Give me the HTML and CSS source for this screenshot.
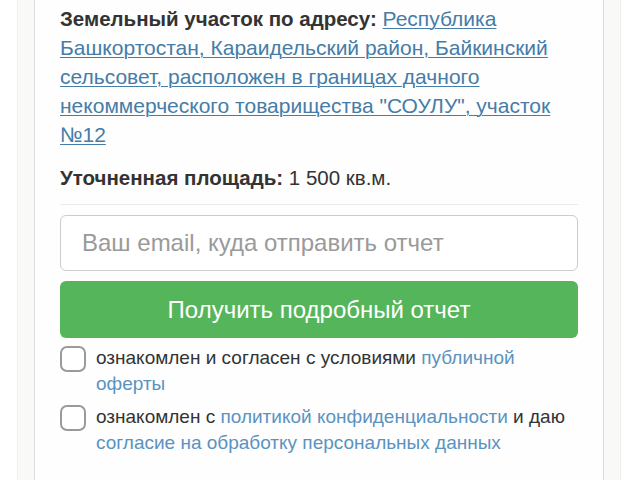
FILE: index.html
```html
<!DOCTYPE html>
<html lang="ru">
<head>
<meta charset="utf-8">
<link rel="stylesheet" href="styles.css">
</head>
<body>
<div class="outer">
  <div class="card">
    <p class="addr"><b>Земельный участок по адресу:</b> <a href="#">Республика Башкортостан, Караидельский район, Байкинский сельсовет, расположен в границах дачного некоммерческого товарищества "СОУЛУ", участок №12</a></p>
    <p class="area"><b>Уточненная площадь:</b> 1 500 кв.м.</p>
    <div class="sep"></div>
    <form class="form">
      <input class="email" type="text" placeholder="Ваш email, куда отправить отчет">
      <button class="btn" type="button">Получить подробный отчет</button>
      <label class="check"><span class="box"></span><span class="lbl">ознакомлен и согласен с условиями <a href="#">публичной оферты</a></span></label>
      <label class="check"><span class="box"></span><span class="lbl">ознакомлен с <a href="#">политикой конфиденциальности</a> и даю <a href="#">согласие на обработку персональных данных</a></span></label>
    </form>
  </div>
</div>
</body>
</html>
```
FILE: styles.css
```css
html, body {
  margin: 0;
  padding: 0;
  background: #ffffff;
  height: 100%;
  overflow: hidden;
}
body {
  font-family: "Liberation Sans", Arial, sans-serif;
  color: #333333;
}
.outer {
  margin-left: 17px;
  width: 604px;
  min-height: 480px;
  border-left: 1px solid #eef0ec;
  border-right: 1px solid #eef0ec;
  background: #f9faf7;
  padding: 0 16px;
  box-sizing: border-box;
}
.card {
  border-left: 1px solid #d9dcd8;
  border-right: 1px solid #d9dcd8;
  background: #fdfefd;
  padding: 4px 25px 40px 25px;
  min-height: 480px;
  box-sizing: border-box;
}
.addr, .area {
  margin: 0;
  font-size: 20.5px;
  line-height: 29px;
}
.addr {
  font-size: 21px;
}
.addr b {
  font-size: 20.5px;
}
.addr a {
  color: #467ca8;
  text-decoration: underline;
  text-underline-offset: 2px;
  text-decoration-thickness: 1px;
}
.area {
  margin-top: 14px;
}
.sep {
  height: 1px;
  background: #e9ebe8;
  margin-top: 12px;
}
.form {
  display: flex;
  flex-direction: column;
  margin-top: 10px;
}
.email {
  height: 56px;
  border: 1px solid #cccccc;
  border-radius: 6px;
  padding: 0 21px;
  font-family: inherit;
  font-size: 24px;
  color: #333;
  background: #ffffff;
  box-sizing: border-box;
  outline: none;
}
.email::placeholder {
  color: #9a9a9a;
}
.btn {
  margin-top: 10px;
  height: 57px;
  border: none;
  border-radius: 6px;
  background: #55b55a;
  color: #ffffff;
  font-family: inherit;
  font-size: 24px;
}
.check {
  display: flex;
  align-items: flex-start;
  gap: 10px;
  margin-top: 7px;
  font-size: 19px;
  line-height: 26px;
  color: #333;
}
.box {
  flex: none;
  width: 26px;
  height: 26px;
  margin-top: 1px;
  box-sizing: border-box;
  border: 2px solid #9a9a9a;
  border-radius: 7px;
  background: #fff;
}
.lbl {
  padding-right: 10px;
}
.lbl a {
  color: #5a93c0;
  text-decoration: none;
}
```
